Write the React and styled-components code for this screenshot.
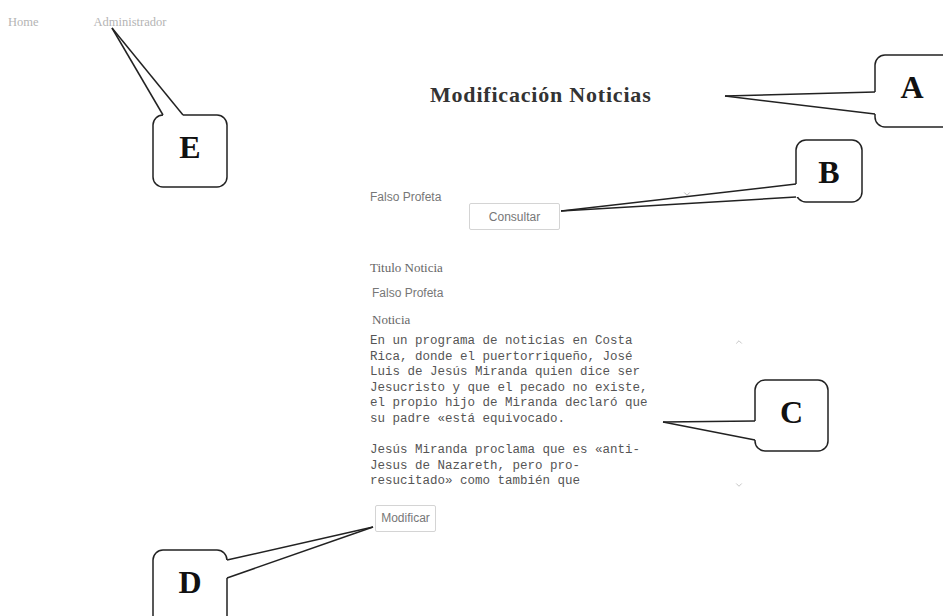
import React from "react";
import styled, { createGlobalStyle } from "styled-components";
import { ChevronDown, ChevronUp } from "lucide-react";

const GlobalStyle = createGlobalStyle`
  html, body {
    margin: 0;
    background: #fff;
  }
`;

const Page = styled.div`
  position: relative;
  width: 943px;
  height: 616px;
  overflow: hidden;
  background: #fff;
`;

const Nav = styled.nav`
  display: flex;
  gap: 55px;
  padding: 15px 0 0 8px;
  height: 14px;
  font-family: "Liberation Serif", serif;
  font-size: 12.5px;
  line-height: 14px;
  color: #b4b4b4;
`;

const NavLink = styled.a`
  color: inherit;
  text-decoration: none;
`;

const Main = styled.main`
  display: flex;
  flex-direction: column;
  align-items: flex-start;
  width: 384px;
  margin-left: 366px;
`;

const Title = styled.h1`
  margin: 53px 0 0 64px;
  font-family: "Liberation Serif", serif;
  font-size: 22px;
  line-height: 26px;
  font-weight: bold;
  letter-spacing: 0.8px;
  color: #333;
`;

const SelectBox = styled.div`
  display: flex;
  align-items: center;
  justify-content: space-between;
  box-sizing: border-box;
  width: 330px;
  height: 14px;
  margin-top: 82px;
  padding: 0 4px;
  font-family: "Liberation Sans", sans-serif;
  font-size: 12px;
  color: #777;
  svg {
    margin-top: -6px;
  }
`;

const Button = styled.button`
  box-sizing: border-box;
  width: ${(p) => p.$width}px;
  height: 27px;
  margin: ${(p) => p.$top}px 0 0 ${(p) => p.$left}px;
  padding: 0;
  border: 1px solid #d4d4d4;
  border-radius: 2px;
  background: #fff;
  font-family: "Liberation Sans", sans-serif;
  font-size: 12px;
  color: #777;
`;

const Label = styled.div`
  margin-top: ${(p) => p.$top}px;
  padding-left: ${(p) => p.$left}px;
  font-family: "Liberation Serif", serif;
  font-size: 13px;
  line-height: 16px;
  color: #666;
`;

const Field = styled.div`
  margin-top: 9px;
  padding-left: 6px;
  font-family: "Liberation Sans", sans-serif;
  font-size: 12px;
  line-height: 16px;
  color: #777;
`;

const TextBox = styled.div`
  display: flex;
  justify-content: space-between;
  width: 384px;
  margin-top: 6px;
`;

const NewsText = styled.div`
  padding-left: 4px;
  font-family: "Liberation Mono", monospace;
  font-size: 12.5px;
  line-height: 15.6px;
  color: #555;
  white-space: pre;
`;

const Scroll = styled.div`
  display: flex;
  flex-direction: column;
  justify-content: space-between;
  padding: 3px 6px 0 0;
  color: #bbb;
`;

const Overlay = styled.svg`
  position: absolute;
  top: 0;
  left: 0;
  pointer-events: none;
`;

const lines = [
  "En un programa de noticias en Costa",
  "Rica, donde el puertorriqueño, José",
  "Luis de Jesús Miranda quien dice ser",
  "Jesucristo y que el pecado no existe,",
  "el propio hijo de Miranda declaró que",
  "su padre «está equivocado.",
  "",
  "Jesús Miranda proclama que es «anti-",
  "Jesus de Nazareth, pero pro-",
  "resucitado» como también que",
];

// dir: inward direction of the box edge the pointer joins
const callouts = [
  { l: "A", x: 875, y: 55, w: 80, h: 72, tip: [725, 96], p1: [875, 92], p2: [875, 114], dir: [1, 0] },
  { l: "B", x: 796, y: 140, w: 66, h: 62, tip: [561, 211], p1: [796, 184], p2: [796, 197], dir: [1, 0] },
  { l: "C", x: 755, y: 380, w: 73, h: 71, tip: [663, 422], p1: [755, 421], p2: [755, 440], dir: [1, 0] },
  { l: "D", x: 153, y: 550, w: 74, h: 80, tip: [373, 527], p1: [227, 560], p2: [227, 578], dir: [-1, 0] },
  { l: "E", x: 153, y: 115, w: 74, h: 72, tip: [112, 28], p1: [163, 115], p2: [183, 115], dir: [0, 1] },
];

function Callouts() {
  return (
    <Overlay width="943" height="616" viewBox="0 0 943 616">
      {callouts.map((c) => {
        const [dx, dy] = c.dir;
        const q1 = [c.p1[0] + dx * 2, c.p1[1] + dy * 2];
        const q2 = [c.p2[0] + dx * 2, c.p2[1] + dy * 2];
        return (
          <g key={c.l} stroke="#222" strokeWidth="1.5" fill="#fff">
            <rect x={c.x} y={c.y} width={c.w} height={c.h} rx="10" />
            <polygon
              points={[c.tip, c.p1, q1, q2, c.p2].map((p) => p.join(",")).join(" ")}
              stroke="none"
            />
            <line x1={c.tip[0]} y1={c.tip[1]} x2={c.p1[0]} y2={c.p1[1]} />
            <line x1={c.tip[0]} y1={c.tip[1]} x2={c.p2[0]} y2={c.p2[1]} />
            <text
              x={c.x + Math.min(c.w, 74) / 2}
              y={c.y + 43}
              textAnchor="middle"
              stroke="none"
              fill="#111"
              fontFamily="Liberation Serif, serif"
              fontWeight="bold"
              fontSize="32"
            >
              {c.l}
            </text>
          </g>
        );
      })}
    </Overlay>
  );
}

export default function App() {
  return (
    <Page>
      <GlobalStyle />
      <Nav>
        <NavLink href="#">Home</NavLink>
        <NavLink href="#">Administrador</NavLink>
      </Nav>
      <Main>
        <Title>Modificación Noticias</Title>
        <SelectBox>
          <span>Falso Profeta</span>
          <ChevronDown size={10} color="#aaa" />
        </SelectBox>
        <Button $width={91} $top={-1} $left={103}>
          Consultar
        </Button>
        <Label $top={30} $left={4}>Titulo Noticia</Label>
        <Field>Falso Profeta</Field>
        <Label $top={11} $left={6}>Noticia</Label>
        <TextBox>
          <NewsText>{lines.join("\n")}</NewsText>
          <Scroll>
            <ChevronUp size={10} />
            <ChevronDown size={10} />
          </Scroll>
        </TextBox>
        <Button $width={61} $top={15} $left={9}>
          Modificar
        </Button>
      </Main>
      <Callouts />
    </Page>
  );
}
